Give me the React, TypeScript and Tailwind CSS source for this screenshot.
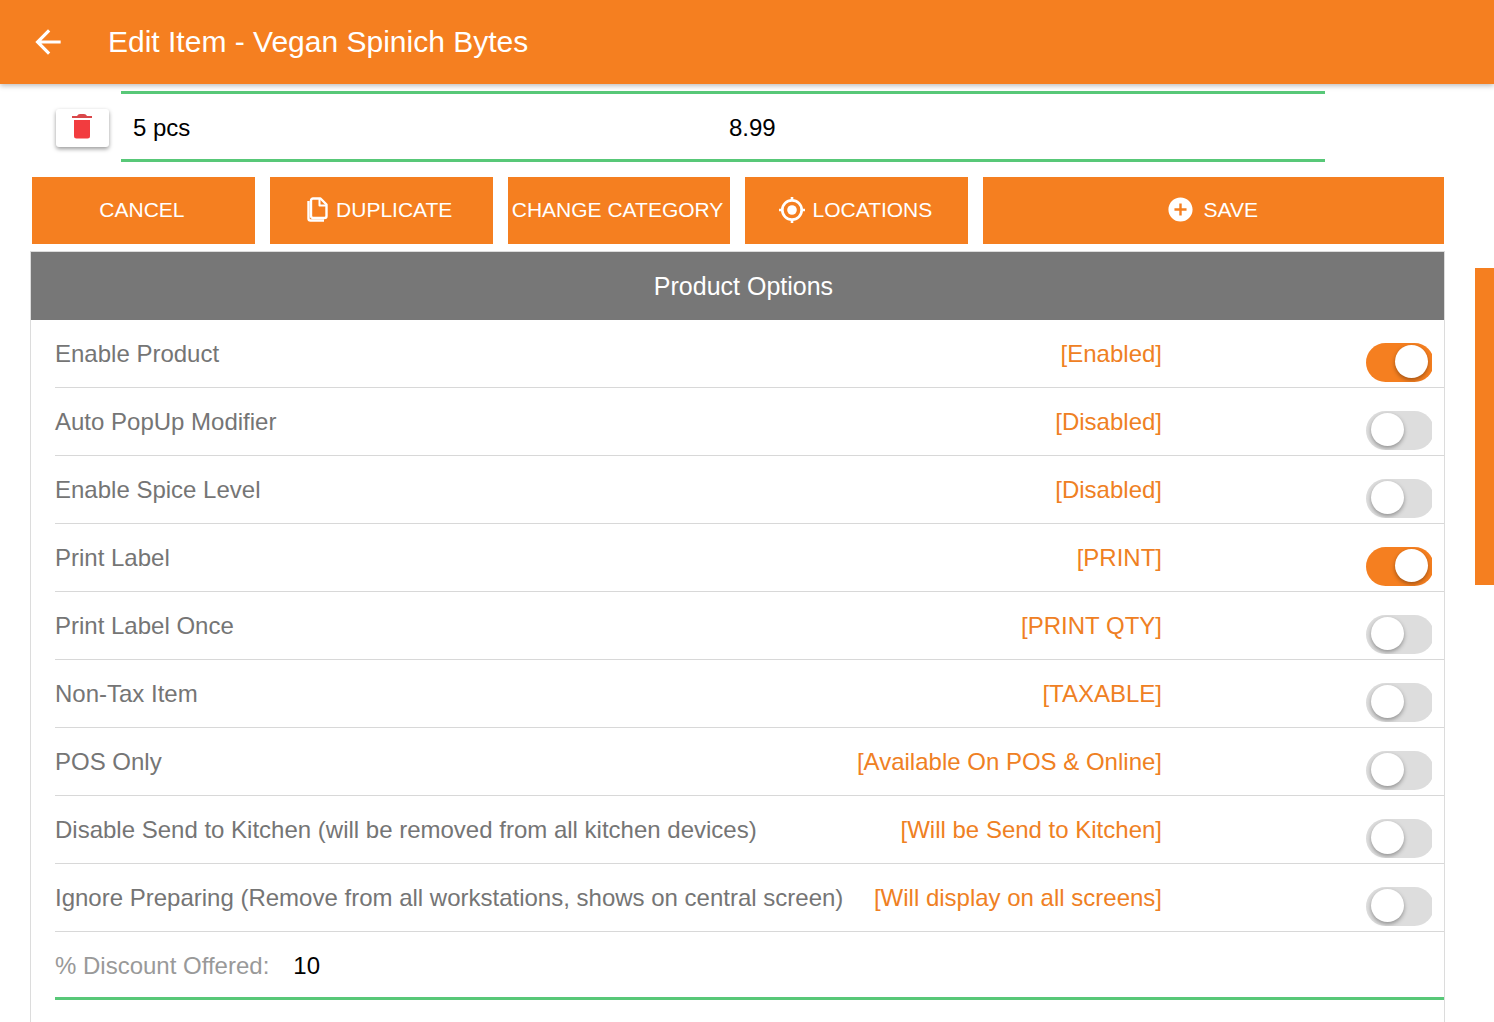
import { useState } from "react";
import type { ReactNode } from "react";
import { MdAddCircle, MdArrowBack } from "react-icons/md";

interface Option {
  id: string;
  label: string;
  on: string;
  off: string;
  enabled: boolean;
}

const OPTIONS: Option[] = [
  { id: "enable", label: "Enable Product", on: "[Enabled]", off: "[Disabled]", enabled: true },
  { id: "popup", label: "Auto PopUp Modifier", on: "[Enabled]", off: "[Disabled]", enabled: false },
  { id: "spice", label: "Enable Spice Level", on: "[Enabled]", off: "[Disabled]", enabled: false },
  { id: "print", label: "Print Label", on: "[PRINT]", off: "[DO NOT PRINT]", enabled: true },
  { id: "once", label: "Print Label Once", on: "[PRINT ONCE]", off: "[PRINT QTY]", enabled: false },
  { id: "tax", label: "Non-Tax Item", on: "[NON-TAXABLE]", off: "[TAXABLE]", enabled: false },
  { id: "pos", label: "POS Only", on: "[POS Only]", off: "[Available On POS & Online]", enabled: false },
  {
    id: "kitchen",
    label: "Disable Send to Kitchen (will be removed from all kitchen devices)",
    on: "[Will not be Send to Kitchen]",
    off: "[Will be Send to Kitchen]",
    enabled: false,
  },
  {
    id: "preparing",
    label: "Ignore Preparing (Remove from all workstations, shows on central screen)",
    on: "[Will display on central screen]",
    off: "[Will display on all screens]",
    enabled: false,
  },
];

export default function App() {
  const [options, setOptions] = useState(OPTIONS);
  const [size, setSize] = useState("5 pcs");
  const [price, setPrice] = useState("8.99");
  const [discount, setDiscount] = useState("10");

  function toggle(id: string) {
    setOptions((prev) => prev.map((o) => (o.id === id ? { ...o, enabled: !o.enabled } : o)));
  }

  return (
    <div className="flex h-screen flex-col overflow-hidden bg-white font-['Liberation_Sans',Arial,sans-serif] text-2xl text-black">
      <header className="z-10 flex h-[84px] shrink-0 items-center bg-[#f57f20] pl-[29px] text-white shadow-[0_2px_5px_rgba(0,0,0,0.25)]">
        <button type="button" aria-label="Back" className="mr-[41px]">
          <MdArrowBack size={38} />
        </button>
        <h1 className="text-[30px] leading-9">Edit Item - Vegan Spinich Bytes</h1>
      </header>

      <div className="flex min-h-0 flex-1">
        <main className="flex min-w-0 flex-1 flex-col pt-[7px] pr-[30px] pl-[30px]">
          {/* Size / price */}
          <div className="flex shrink-0 pr-[120px] pl-[26px]">
            <button
              type="button"
              aria-label="Delete size"
              className="mt-[18px] mr-3 flex h-[38px] w-[53px] shrink-0 justify-center rounded-[3px] bg-white pt-[5px] pr-[2px] shadow-[0_2px_4px_rgba(0,0,0,0.4)]"
            >
              <TrashIcon />
            </button>
            <div className="grid h-[71px] min-w-0 flex-1 grid-cols-2 border-y-3 border-[#58c878] pt-[2px] pl-3">
              <input
                aria-label="Size"
                className="min-w-0 outline-none"
                value={size}
                onChange={(e) => setSize(e.target.value)}
              />
              <input
                aria-label="Price"
                className="min-w-0 outline-none"
                value={price}
                onChange={(e) => setPrice(e.target.value)}
              />
            </div>
          </div>

          {/* Actions */}
          <div className="mt-[15px] mb-[7px] grid shrink-0 grid-cols-6 gap-[15px] pr-px pl-[2px]">
            <ActionButton>CANCEL</ActionButton>
            <ActionButton>
              <CopyIcon />
              DUPLICATE
            </ActionButton>
            <ActionButton>CHANGE CATEGORY</ActionButton>
            <ActionButton>
              <LocateIcon />
              LOCATIONS
            </ActionButton>
            <ActionButton wide>
              <MdAddCircle size={29} />
              SAVE
            </ActionButton>
          </div>

          {/* Product options */}
          <section className="min-h-0 flex-1 border-x border-t border-[#dcdcdc]">
            <h2 className="flex h-[68px] items-center justify-center bg-[#777777] pt-[2px] pl-3 text-[25px] text-white">
              Product Options
            </h2>
            <div className="pl-6">
              {options.map((o) => (
                <OptionRow key={o.id} option={o} onToggle={() => toggle(o.id)} />
              ))}
              <div className="flex h-[68px] items-center border-b-3 border-[#58c878] pt-[2px]">
                <label htmlFor="discount" className="mr-6 text-[#999999]">
                  % Discount Offered:
                </label>
                <input
                  id="discount"
                  className="min-w-0 flex-1 outline-none"
                  value={discount}
                  onChange={(e) => setDiscount(e.target.value)}
                />
              </div>
            </div>
          </section>
        </main>

        {/* Scroll thumb */}
        <div className="w-[19px] shrink-0 pt-[184px]">
          <div className="h-[317px] bg-[#f57f20]" />
        </div>
      </div>
    </div>
  );
}

function ActionButton({ children, wide = false }: { children: ReactNode; wide?: boolean }) {
  return (
    <button
      type="button"
      className={`flex h-[67px] items-center justify-center gap-2 bg-[#f57f20] pr-[3px] pb-[2px] text-[21px] whitespace-nowrap text-white ${
        wide ? "col-span-2" : ""
      }`}
    >
      {children}
    </button>
  );
}

function OptionRow({ option, onToggle }: { option: Option; onToggle: () => void }) {
  return (
    <div className="flex h-[68px] items-center border-b border-[#d8d8d8] pr-3">
      <label htmlFor={option.id} className="flex-1 whitespace-nowrap text-[#757575]">
        {option.label}
      </label>
      <span className="whitespace-nowrap text-[#ef8023]">
        {option.enabled ? option.on : option.off}
      </span>
      <div className="mt-[17px] ml-[204px] flex w-[66px] shrink-0 overflow-hidden">
        <input
          id={option.id}
          type="checkbox"
          role="switch"
          checked={option.enabled}
          onChange={onToggle}
          className="h-[39px] w-[68px] shrink-0 appearance-none rounded-full bg-[#dddddd] pt-[2px] pl-[5px] before:block before:size-[33px] before:rounded-full before:bg-white before:shadow-[0_2px_4px_rgba(0,0,0,0.35)] checked:bg-[#f57f20] checked:pl-[29px]"
        />
      </div>
    </div>
  );
}

function TrashIcon() {
  return (
    <svg width="20" height="25" viewBox="0 0 20 25" fill="#f23c3f">
      <path d="M0 2h5q1-2 3-2h4q2 0 3 2h5v2H0z" fill="#d9474a" />
      <path d="M2 6h16v16a2.500 2.500 0 0 1-2.500 2.500h-11A2.500 2.500 0 0 1 2 22z" />
    </svg>
  );
}

function CopyIcon() {
  return (
    <svg width="21" height="25" viewBox="0 0 21 25" fill="none" stroke="currentColor" strokeLinejoin="round">
      <path d="M6 1.500h7.500l6 6v11.500a2 2 0 0 1-2 2H6a2 2 0 0 1-2-2V3.500a2 2 0 0 1 2-2z" strokeWidth="2.400" />
      <path d="M12.500 2v6.500h6.500" strokeWidth="2" />
      <path d="M1.500 4v17.500a2 2 0 0 0 2 2H17" strokeWidth="2.400" />
    </svg>
  );
}

function LocateIcon() {
  return (
    <svg width="26" height="26" viewBox="0 0 26 26" fill="none" stroke="currentColor">
      <circle cx="13" cy="13" r="9.700" strokeWidth="2.700" />
      <circle cx="13" cy="13" r="4.800" fill="currentColor" stroke="none" />
      <path d="M13 0v3M13 23v3M0 13h3M23 13h3" strokeWidth="2.600" />
    </svg>
  );
}
